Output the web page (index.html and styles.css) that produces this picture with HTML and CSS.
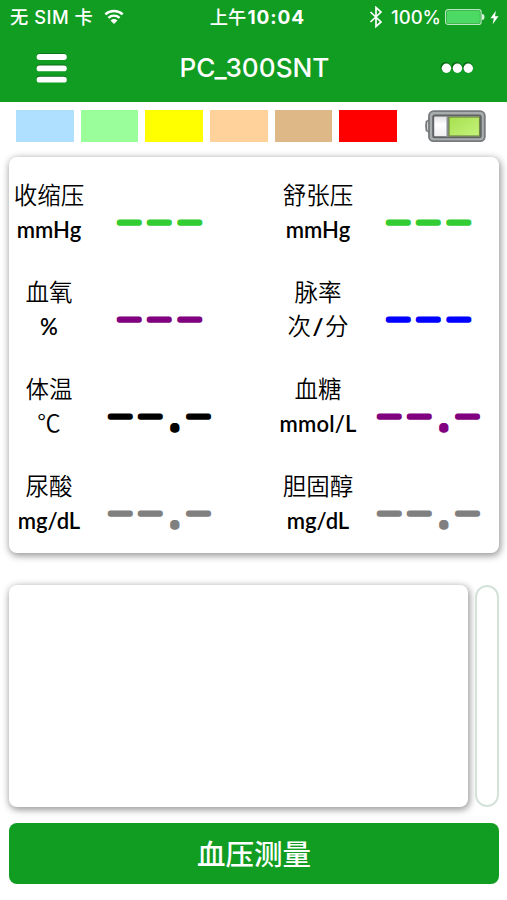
FILE: index.html
```
<!DOCTYPE html>
<html lang="zh-Hans">
<head>
  <meta charset="UTF-8">
  <title>PC_300SNT</title>
  <link rel="stylesheet" href="styles.css">
</head>
<body>
  <header class="header">
    <div class="status-bar">
      <div class="carrier">
        <span class="carrier-name">无 SIM 卡</span>
        <svg class="wifi" width="20" height="16" viewBox="0 0 20 16">
          <path d="M1.3 5.4a12.8 12.8 0 0 1 17.4 0M4.4 8.8a8.4 8.4 0 0 1 11.2 0" fill="none" stroke="#fff" stroke-width="2.4"/>
          <path d="M6.5 11.5a5.4 5.4 0 0 1 7 0L10 15z" fill="#fff"/>
        </svg>
      </div>
      <span class="time">上午<b>10:04</b></span>
      <div class="power">
        <svg width="14" height="22" viewBox="0 0 14 22" fill="none" stroke="#fff" stroke-width="1.7">
          <path d="M1.5 6l10.5 10-5 4.5v-19L12 6 1.5 16"/>
        </svg>
        <span class="percent">100%</span>
        <svg class="battery" width="40" height="16" viewBox="0 0 40 16">
          <rect x=".6" y=".6" width="35.5" height="14.8" rx="2.5" fill="none" stroke="#b8e8bf" stroke-width="1.2"/>
          <rect x="1.8" y="1.8" width="33.1" height="12.4" rx="1.5" fill="#4cd964"/>
          <path d="M37 5q2.5 0 2.5 3T37 11z" fill="#d5f2d9"/>
        </svg>
        <svg width="9" height="15" viewBox="0 0 10 15">
          <path d="M6.5 0L.5 8.3h3.7L3 15l6.5-9H5.6z" fill="#fff"/>
        </svg>
      </div>
    </div>
    <div class="nav">
      <svg class="menu-icon" width="34" height="34" viewBox="0 0 34 34">
        <g stroke="#0a6b16" stroke-width="6" stroke-linecap="round"><path d="M4.5 5.2h24M4.5 16.5h24M4.5 27.7h24"/></g>
        <g stroke="#fff" stroke-width="5.8" stroke-linecap="round"><path d="M4.5 6h24.4M4.5 17.4h24.4M4.5 28.7h24.4"/></g>
      </svg>
      <h1>PC_300SNT</h1>
      <svg class="more-icon" width="34" height="14" viewBox="0 0 34 14">
        <g fill="#0a6b16"><circle cx="5.5" cy="6" r="5"/><circle cx="16.6" cy="6" r="5"/><circle cx="27.6" cy="6" r="5"/></g>
        <g fill="#fff"><circle cx="6.4" cy="7.2" r="4.7"/><circle cx="17.4" cy="7.2" r="4.7"/><circle cx="28.3" cy="7.2" r="4.7"/></g>
      </svg>
    </div>
  </header>

  <div class="colors">
    <div class="swatches">
      <i class="sky"></i>
      <i class="mint"></i>
      <i class="yellow"></i>
      <i class="peach"></i>
      <i class="tan"></i>
      <i class="red"></i>
    </div>
    <svg class="device-battery" width="63" height="34" viewBox="0 0 63 34">
      <defs>
        <linearGradient id="charge" x1="0" y1="0" x2="1" y2="1">
          <stop offset="0" stop-color="#a6e04f"/>
          <stop offset="1" stop-color="#c5f47c"/>
        </linearGradient>
        <linearGradient id="empty" x1="0" y1="0" x2="0" y2="1">
          <stop offset="0" stop-color="#ddd"/>
          <stop offset=".4" stop-color="#fff"/>
          <stop offset="1" stop-color="#eee"/>
        </linearGradient>
      </defs>
      <path d="M6 8.5Q4.5 12 2.5 12.5 1.5 17 2.5 21.5 4.5 22 6 25.500" fill="#ddd" stroke="#777a7c" stroke-width="1.8"/>
      <rect x="5" y="2.2" width="55.8" height="30" rx="4.5" fill="#a9acad" stroke="#777a7c" stroke-width="1.8"/>
      <rect x="9.2" y="6.6" width="47.5" height="21.6" rx="1.5" fill="url(#empty)" stroke="#606365" stroke-width="2"/>
      <rect x="22.5" y="7" width="3" height="21" fill="#8b8e90"/>
      <rect x="25" y="8" width="30.5" height="19" fill="url(#charge)" stroke="#718746" stroke-width="1.2"/>
    </svg>
  </div>

  <main>
    <section class="card readings">
      <div class="reading">
        <p class="label">收缩压<span class="unit">mmHg</span></p>
        <svg class="value green" width="142" height="40"><text class="dash" x="30.2 60.2 90.8" y="15">———</text></svg>
      </div>
      <div class="reading">
        <p class="label">舒张压<span class="unit">mmHg</span></p>
        <svg class="value green" width="142" height="40"><text class="dash" x="30.2 60.2 90.8" y="15">———</text></svg>
      </div>
      <div class="reading">
        <p class="label">血氧<span class="unit">%</span></p>
        <svg class="value purple" width="142" height="40"><text class="dash" x="30.2 60.2 90.8" y="15">———</text></svg>
      </div>
      <div class="reading">
        <p class="label">脉率<span class="unit cjk">次<b>/</b>分</span></p>
        <svg class="value blue" width="142" height="40"><text class="dash" x="30.2 60.2 90.8" y="15">———</text></svg>
      </div>
      <div class="reading">
        <p class="label">体温<span class="unit cjk">℃</span></p>
        <svg class="value black" width="142" height="40"><text class="dash" x="21.2 51.2" y="15">——<tspan class="dot" x="82.9" y="21.6">.</tspan><tspan x="99.5" y="15">—</tspan></text></svg>
      </div>
      <div class="reading">
        <p class="label">血糖<span class="unit mmol">mmol/L</span></p>
        <svg class="value purple" width="142" height="40"><text class="dash" x="21.2 51.2" y="15">——<tspan class="dot" x="82.9" y="21.6">.</tspan><tspan x="99.5" y="15">—</tspan></text></svg>
      </div>
      <div class="reading">
        <p class="label">尿酸<span class="unit">mg/dL</span></p>
        <svg class="value gray" width="142" height="40"><text class="dash" x="21.2 51.2" y="15">——<tspan class="dot" x="82.9" y="21.6">.</tspan><tspan x="99.5" y="15">—</tspan></text></svg>
      </div>
      <div class="reading">
        <p class="label">胆固醇<span class="unit">mg/dL</span></p>
        <svg class="value gray" width="142" height="40"><text class="dash" x="21.2 51.2" y="15">——<tspan class="dot" x="82.9" y="21.6">.</tspan><tspan x="99.5" y="15">—</tspan></text></svg>
      </div>
    </section>

    <div class="wave">
      <div class="card chart"></div>
      <div class="gauge"></div>
    </div>

    <button class="measure">血压测量</button>
  </main>
</body>
</html>
```
FILE: styles.css
```
* {
  box-sizing: border-box;
}
body {
  margin: 0;
  height: 900px;
  background: #fff;
  color: #000;
  font-family: Inter, "Noto Sans CJK SC", sans-serif;
}
svg {
  display: block;
  flex: none;
}
.header {
  height: 102px;
  background: #119c22;
  color: #fff;
}
.status-bar {
  display: flex;
  align-items: center;
  justify-content: space-between;
  height: 34px;
  padding: 0 8px 0 10px;
  font-size: 18.3px;
  line-height: 34px;
  white-space: nowrap;
}
.carrier,
.power {
  display: flex;
  align-items: center;
}
.carrier {
  gap: 11px;
  width: 137px;
}
.carrier-name {
  font-weight: 500;
  letter-spacing: 0.5px;
}
.power {
  justify-content: flex-end;
  width: 131px;
}
.percent {
  margin: 0 4px 0 8px;
  font-size: 18.5px;
  font-weight: 500;
}
.battery {
  margin-right: 5px;
}
.time {
  font-weight: 500;
}
.time b {
  margin-left: 1px;
  font-size: 19px;
  letter-spacing: 0.95px;
}
.nav {
  display: grid;
  grid-template-columns: 1fr auto 1fr;
  align-items: center;
  height: 68px;
  padding: 0 33px 0 35px;
}
.nav h1 {
  margin: 0;
  font-size: 26.2px;
  font-weight: 500;
  line-height: 68px;
}
.more-icon {
  justify-self: end;
}
.colors {
  display: flex;
  align-items: center;
  height: 48px;
  padding: 0 20px 0 16px;
  justify-content: space-between;
}
.swatches {
  display: grid;
  grid-template-columns: repeat(6, 1fr);
  gap: 7px;
  width: 381px;
  height: 32px;
}
.sky { background: #b0e0ff; }
.mint { background: #9aff9a; }
.yellow { background: #ff0; }
.peach { background: #ffd19b; }
.tan { background: #deb887; }
.red { background: #f00; }
main {
  padding: 7px 8px 0 9px;
}
.card {
  background: #fff;
  border-radius: 8px;
  box-shadow: 1px 2px 7px 1px rgba(0, 0, 0, 0.4);
}
.readings {
  display: grid;
  grid-template-columns: 222px 221px;
  grid-auto-rows: 97px;
  column-gap: 47px;
  height: 396px;
  padding-top: 22px;
}
.reading {
  display: flex;
}
.label {
  flex: none;
  width: 80px;
  margin: 0;
  font-size: 23.5px;
  font-weight: 350;
  line-height: 34px;
  text-align: center;
  white-space: nowrap;
}
.unit {
  display: block;
  font-family: Lato, "Noto Sans CJK SC", sans-serif;
  font-size: 22px;
  font-weight: 600;
}
.unit.cjk {
  font-size: 23.5px;
  font-weight: 350;
  line-height: 33px;
}
.unit.cjk b {
  margin: 0 1.5px;
}
.unit.mmol {
  letter-spacing: 0.2px;
}
.value {
  margin-top: 34px;
  overflow: visible;
  stroke-linejoin: round;
}
.dash {
  font-family: "Liberation Sans", sans-serif;
  font-size: 20px;
  stroke-width: 5;
}
.dot {
  font-size: 20px;
  stroke-width: 7.4;
}
.green { fill: #32cd32; stroke: #32cd32; }
.purple { fill: #800080; stroke: #800080; }
.blue { fill: #00f; stroke: #00f; }
.black { fill: #000; stroke: #000; }
.gray { fill: #808080; stroke: #808080; }
.wave {
  display: flex;
  justify-content: space-between;
  height: 222px;
  margin-top: 32px;
}
.chart {
  width: 459px;
}
.gauge {
  width: 24px;
  border: 2px solid #d3e3da;
  border-radius: 12px;
}
.measure {
  display: block;
  width: 100%;
  height: 61px;
  margin-top: 16px;
  padding: 0 0 2px;
  border: 0;
  border-radius: 8px;
  background: #119c22;
  color: #fff;
  font-family: "Noto Sans CJK SC", sans-serif;
  font-size: 28.5px;
  font-weight: 500;
  line-height: 58px;
}
```
